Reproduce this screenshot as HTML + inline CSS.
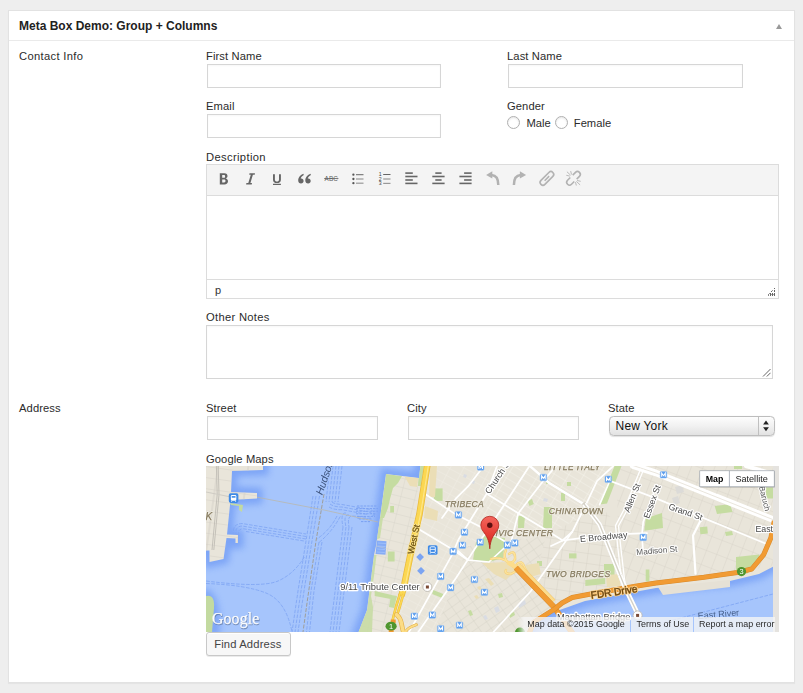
<!DOCTYPE html>
<html>
<head>
<meta charset="utf-8">
<title>Meta Box Demo</title>
<style>
*{box-sizing:border-box;margin:0;padding:0}
html,body{width:803px;height:693px;overflow:hidden}
body{background:#eeeeee;font-family:"Liberation Sans",sans-serif;font-size:11.2px;color:#2e2e2e;position:relative}
.box{position:absolute;left:8px;top:10px;width:787px;height:673px;background:#fff;border:1px solid #e2e2e2;box-shadow:0 1px 1px rgba(0,0,0,.04)}
.hd{position:absolute;left:0;top:0;right:0;height:30px;border-bottom:1px solid #eaeaea}
.title{position:absolute;left:19px;top:19px;font-size:12px;font-weight:bold;color:#222;line-height:14px;white-space:nowrap}
.tri{position:absolute;left:775.6px;top:24px;width:0;height:0;border-left:3.7px solid transparent;border-right:3.7px solid transparent;border-bottom:5.2px solid #999}
.lb{position:absolute;line-height:13px;white-space:nowrap;color:#2b2b2b;letter-spacing:0.1px;margin-left:0}
.in{position:absolute;height:24px;background:#fff;border:1px solid #d6d6d6;box-shadow:inset 0 1px 2px rgba(0,0,0,.035)}
.radio{position:absolute;width:13px;height:13px;border-radius:50%;border:1px solid #b0b0b0;background:#fff;box-shadow:inset 0 1px 2px rgba(0,0,0,.1)}
.ed{position:absolute;left:206px;top:164px;width:573px;height:135px;border:1px solid #dcdcdc;background:#fff}
.tb{position:absolute;left:0;top:0;right:0;height:31px;background:#f4f4f4;border-bottom:1px solid #dcdcdc}
.sb{position:absolute;left:0;right:0;bottom:0;height:19px;border-top:1px solid #dcdcdc;background:#fff}
.ta{position:absolute;left:206px;top:325px;width:567px;height:54px;background:#fff;border:1px solid #d6d6d6;box-shadow:inset 0 1px 2px rgba(0,0,0,.035)}
.sel{position:absolute;left:609px;top:416px;width:166px;height:20px;border:1px solid #bdbdbd;border-radius:4.5px;background:linear-gradient(#fdfdfd,#f1f1f1 50%,#e2e2e2);box-shadow:0 0.5px 1px rgba(0,0,0,.12)}
.sel span{position:absolute;left:5.6px;top:2px;font-size:12px;line-height:14px;color:#111;letter-spacing:0.2px}
.sel i{position:absolute;right:15px;top:0;bottom:0;width:1px;background:#c0c0c0}
.btn{position:absolute;left:206px;top:632px;width:85px;height:24px;background:#f7f7f7;border:1px solid #c8c8c8;border-radius:3px;box-shadow:inset 0 1px 0 #fff,0 1px 0 rgba(0,0,0,.08);text-align:center;line-height:22px;color:#444;font-size:11.2px}
#map{position:absolute;left:206px;top:466px;width:573px;height:166px;background:#e5e3df;overflow:hidden;will-change:transform;opacity:0.999}
</style>
</head>
<body>
<div class="box"></div>
<div class="hd" style="left:9px;top:11px;width:785px"></div>
<div class="title">Meta Box Demo: Group + Columns</div>
<div class="tri"></div>

<div class="lb" style="left:19px;top:50px;letter-spacing:0.33px">Contact Info</div>
<div class="lb" style="left:206px;top:50px">First Name</div>
<div class="in" style="left:207px;top:64px;width:234px"></div>
<div class="lb" style="left:507px;top:50px">Last Name</div>
<div class="in" style="left:508px;top:64px;width:235px"></div>

<div class="lb" style="left:206px;top:100px">Email</div>
<div class="in" style="left:207px;top:114px;width:234px"></div>
<div class="lb" style="left:507px;top:100px">Gender</div>
<div class="radio" style="left:507px;top:116px"></div>
<div class="lb" style="left:526.4px;top:117px;letter-spacing:0">Male</div>
<div class="radio" style="left:555px;top:116px"></div>
<div class="lb" style="left:573.8px;top:117px;letter-spacing:0">Female</div>

<div class="lb" style="left:206px;top:151px;letter-spacing:0.36px">Description</div>
<div class="ed">
  <div class="tb"><svg width="571" height="30" viewBox="0 0 571 30" style="position:absolute;left:0;top:0;font-family:'Liberation Sans',sans-serif">
<g fill="#666666">
<path transform="translate(12.8 8.2)" fill-rule="evenodd" d="M0 0H4.5C6.8 0 7.7 1.2 7.7 2.9C7.7 4.2 7 5 5.9 5.3C7.3 5.6 8.2 6.5 8.2 8C8.2 10 6.8 11.2 4.7 11.2H0ZM2.4 1.9V4.5H4.1C5 4.5 5.3 3.9 5.3 3.2C5.3 2.4 4.9 1.9 4 1.9ZM2.4 6.4V9.3H4.3C5.3 9.3 5.7 8.7 5.7 7.85C5.7 7 5.3 6.4 4.3 6.4Z"/>
<path transform="translate(38.9 8.2)" d="M3.6 0H9.1L8.8 1.5H7L4.5 9.7H6.1L5.8 11.2H0.2L0.5 9.7H2.4L4.9 1.5H3.3Z"/>
<path transform="translate(66 9.2)" d="M0 0H1.9V5.4C1.9 6.9 2.7 7.4 3.95 7.4S6 6.9 6 5.4V0H7.9V5.5C7.9 7.9 6.4 8.9 3.95 8.9S0 7.9 0 5.5ZM0 9.5H7.9V10.7H0Z"/>
<g transform="translate(91.2 8.5)"><path id="qm" d="M5.2 0.3C2.4 1.4 0 3.9 0 6.9C0 8.8 1.2 9.9 2.8 9.9C4.3 9.9 5.4 8.8 5.4 7.4C5.4 6 4.4 5 3.1 5C2.9 5 2.7 5 2.5 5.1C2.8 3.5 4.1 2.2 5.6 1.4Z"/><use href="#qm" x="7.1"/></g>
</g>
<g fill="#5e5e5e"><text x="117.6" y="16.2" font-size="7.1" letter-spacing="0.15" textLength="13.4" lengthAdjust="spacingAndGlyphs">ABC</text><rect x="117.2" y="13.1" width="14.2" height="0.8"/></g>
<!-- UL -->
<g transform="translate(145.2 0)"><circle cx="1.2" cy="9.7" r="1.15" fill="#555"/><circle cx="1.2" cy="14" r="1.15" fill="#555"/><circle cx="1.2" cy="18.2" r="1.15" fill="#555"/><rect x="3.8" y="9.2" width="7.5" height="1" fill="#666"/><rect x="3.8" y="13.4" width="7.5" height="1.2" fill="#999"/><rect x="3.8" y="17.6" width="7.5" height="1.2" fill="#999"/></g>
<!-- OL -->
<g transform="translate(171.8 0)"><g font-size="5.2" fill="#444"><text x="0" y="11.3">1</text><text x="0" y="15.7">2</text><text x="0" y="20.1">3</text></g><rect x="4.4" y="9" width="7.3" height="1" fill="#666"/><rect x="4.4" y="13.4" width="7.3" height="1.2" fill="#999"/><rect x="4.4" y="17.8" width="7.3" height="1.2" fill="#999"/></g>
<!-- align -->
<g fill="#666">
<g transform="translate(198.3 0)"><rect x="0" y="7.3" width="7.5" height="1.6"/><rect x="0" y="10.7" width="12.2" height="1.6"/><rect x="0" y="14.2" width="7.5" height="1.6"/><rect x="0" y="17.6" width="12.2" height="1.6"/></g>
<g transform="translate(225.3 0)"><rect x="3" y="7.3" width="6.3" height="1.6"/><rect x="0" y="10.7" width="12.3" height="1.6"/><rect x="3" y="14.2" width="6.3" height="1.6"/><rect x="0" y="17.6" width="12.3" height="1.6"/></g>
<g transform="translate(252.4 0)"><rect x="4.7" y="7.3" width="7.5" height="1.6"/><rect x="0" y="10.7" width="12.2" height="1.6"/><rect x="4.7" y="14.2" width="7.5" height="1.6"/><rect x="0" y="17.6" width="12.2" height="1.6"/></g>
</g>
<!-- undo / redo -->
<g fill="#b2b2b2" stroke="#b2b2b2">
<g transform="translate(279.1 6.2)"><path d="M0 3.7L6.2 0V7.4Z" stroke="none"/><path d="M5.5 3.7C10.4 4 12.2 8 12.2 13.7" fill="none" stroke-width="2.5"/></g>
<g transform="translate(319.1 6.2) scale(-1 1)"><path d="M0 3.7L6.2 0V7.4Z" stroke="none"/><path d="M5.5 3.7C10.4 4 12.2 8 12.2 13.7" fill="none" stroke-width="2.5"/></g>
</g>
<!-- link / unlink -->
<g fill="none" stroke="#b2b2b2" stroke-width="1.6">
<g transform="translate(339.9 13.4) rotate(-45)"><rect x="-8.4" y="-2.8" width="16.8" height="5.6" rx="2.8"/><path d="M-3.2 0H3.2" stroke-width="1.5"/></g>
<g transform="translate(366.5 13.3) rotate(-45)"><path d="M-1.7 -2.8H-5.6A2.8 2.8 0 0 0 -5.6 2.8H-1.7M1.7 -2.8H5.6A2.8 2.8 0 0 1 5.6 2.8H1.7"/></g>
<g stroke-width="0.9" transform="translate(366.5 13.3)"><path d="M-2.9 -3.1L-6.6 -6.6M-3.6 -2.2L-7.2 -3M-2 -3.8L-2.8 -7.2M2.9 3.1L6.6 6.6M3.6 2.2L7.2 3M2 3.8L2.8 7.2"/></g>
</g>
</svg></div>
  <div class="sb"><svg width="10" height="10" viewBox="0 0 10 10" shape-rendering="crispEdges" style="position:absolute;right:2px;top:7px"><g fill="#666"><rect x="8" y="1" width="1" height="1"/><rect x="6" y="3" width="1" height="1" fill="#999"/><rect x="8" y="3" width="1" height="2"/><rect x="5" y="4" width="1" height="1"/><rect x="2" y="7" width="1" height="2" fill="#888"/><rect x="4" y="6" width="1" height="3"/><rect x="6" y="6" width="1" height="3"/><rect x="8" y="6" width="1" height="3"/><rect x="3" y="6" width="1" height="1" fill="#999"/><rect x="5" y="7" width="1" height="1" fill="#aaa"/><rect x="7" y="7" width="1" height="1" fill="#aaa"/></g></svg><span style="position:absolute;left:8px;top:3.5px;font-size:11px;line-height:13px;color:#333">p</span></div>
</div>

<div class="lb" style="left:206px;top:311px;letter-spacing:0.3px">Other Notes</div>
<div class="ta"><svg width="9" height="9" viewBox="0 0 9 9" style="position:absolute;right:1px;bottom:1px"><path d="M1 8.5L8.5 1M4.8 8.5L8.5 4.8" stroke="#555" stroke-width="0.9" fill="none"/></svg></div>

<div class="lb" style="left:19px;top:402px">Address</div>
<div class="lb" style="left:206px;top:402px">Street</div>
<div class="in" style="left:207px;top:416px;width:171px"></div>
<div class="lb" style="left:407px;top:402px">City</div>
<div class="in" style="left:408px;top:416px;width:171px"></div>
<div class="lb" style="left:608px;top:402px">State</div>
<div class="sel"><span>New York</span><i></i><svg width="8" height="12" viewBox="0 0 8 12" style="position:absolute;right:3.6px;top:3.4px"><path d="M4 0.4L6.9 4.4H1.1ZM4 11.2L6.9 7.2H1.1Z" fill="#222"/></svg></div>

<div class="lb" style="left:206px;top:453px">Google Maps</div>
<div id="map">
<svg width="573" height="166" viewBox="0 0 573 166" style="position:absolute;left:0;top:0;font-family:'Liberation Sans',sans-serif">
<defs>
<clipPath id="tiles"><rect x="0" y="0" width="567" height="166"/></clipPath>
<filter id="bl" x="-10%" y="-10%" width="120%" height="120%"><feGaussianBlur stdDeviation="3.6"/></filter>
<filter id="bl1"><feGaussianBlur stdDeviation="0.5"/></filter>
<g id="m"><rect x="-3.3" y="-3.3" width="6.6" height="6.6" rx="1" fill="#5b9dee" stroke="#8fbcf3" stroke-width="0.5"/><path d="M-1.8 1.9V-1.7L0 0.9 1.8-1.7V1.9" fill="none" stroke="#fff" stroke-width="1.05"/></g>
<path id="nj" d="M-5 -5H57V4L26 5L25 26L51 27V32.5L24.5 34L21 68.5L32 69V77H29.5V72.5L20.5 72L17.5 93L3.5 96V84.5H-5Z"/>
<path id="mh" d="M215 -5L213 12L180 8L174 52L170 80L168 89L161 144L151 170H322L329 156L348 146L379 135L450 122L524 115L553 108L572 98V-5Z"/>
<clipPath id="cmh"><use href="#mh"/></clipPath>
<clipPath id="cnj"><use href="#nj"/></clipPath>
<pattern id="gA" width="12" height="7.5" patternUnits="userSpaceOnUse" patternTransform="rotate(28)"><path d="M0 0H12M0 0V7.5" stroke="#f3f0e8" stroke-width="0.8" fill="none"/></pattern>
<pattern id="gB" width="13" height="7" patternUnits="userSpaceOnUse" patternTransform="rotate(31) translate(3 2)"><path d="M0 0H13M0 0V7" stroke="#f5f3ec" stroke-width="1" fill="none"/></pattern>
<pattern id="gC" width="11" height="15" patternUnits="userSpaceOnUse" patternTransform="rotate(21) translate(2 4)"><path d="M0 0H11M0 0V15" stroke="#d5d1c6" stroke-width="0.8" fill="none"/></pattern>
<pattern id="gD" width="13" height="10" patternUnits="userSpaceOnUse" patternTransform="rotate(8) translate(0 3)"><path d="M0 0H13M0 0V10" stroke="#d3cfc4" stroke-width="0.85" fill="none"/></pattern>
<pattern id="gE" width="10" height="8" patternUnits="userSpaceOnUse" patternTransform="rotate(-35)"><path d="M0 0H10M0 0V8" stroke="#d5d1c6" stroke-width="0.85" fill="none"/></pattern>
<pattern id="gF" width="14" height="9" patternUnits="userSpaceOnUse" patternTransform="rotate(14)"><path d="M0 0H14M0 0V9" stroke="#d6d2c8" stroke-width="0.8" fill="none"/></pattern>
<pattern id="gJ" width="30" height="11" patternUnits="userSpaceOnUse" patternTransform="rotate(8)"><path d="M0 0H30M12 0V11" stroke="#d2cec6" stroke-width="0.9" fill="none"/></pattern>
<linearGradient id="pin" x1="0" y1="0" x2="0" y2="1"><stop offset="0" stop-color="#f4675e"/><stop offset="0.55" stop-color="#e53d35"/><stop offset="1" stop-color="#c9271f"/></linearGradient>
</defs>
<g clip-path="url(#tiles)">
<!-- water -->
<rect x="0" y="0" width="567" height="166" fill="#a6c5fc"/>
<g filter="url(#bl)" fill="none" stroke="#7aa3f6" stroke-width="11" opacity="0.95">
<use href="#nj"/><use href="#mh"/><path d="M-4 128Q10 128 8 170"/>
</g>
<g fill="none" stroke="#7fa5f3" stroke-width="0.85" stroke-dasharray="3.6 1.4">
<!-- H2 left group -->
<path d="M28 70Q25 58 36 57.5L100 68"/>
<path d="M30.5 70Q28 60.5 36 60L100 70.5"/>
<path d="M33 70Q31 63 37 62.7L100 73"/>
<path d="M40 65.5L98 75"/>
<!-- V1 top group -->
<path d="M124 0L120 36"/><path d="M127 0L123 36"/><path d="M130 0L126 36"/><path d="M133 0L129 36"/><path d="M136 0L132 36"/>
<!-- H1 fan to shore -->
<path d="M126 36Q128 38 136 38.5L164 43.5Q169 45 168 50"/>
<path d="M124 38Q128 41 136 41L163 46Q167 47 167 50"/>
<path d="M123 41Q128 44 136 43.7L162 48.5"/>
<path d="M140 47Q134 46 137 61"/><path d="M143 49Q137 48 140 61"/><path d="M160 51L146 50Q141 50 143 61"/>
<path d="M165 52L150 52.5"/>
<!-- V2 beside boundary -->
<path d="M107 30L100 75L92 125L86 166"/>
<path d="M110 30L103 75L95 125L89 166"/>
<path d="M113.5 30L106 75L98 125L92 166"/>
<path d="M113 76L105 125L100.5 166"/>
<path d="M116 76L108 125L103.5 166"/>
<!-- V3 -->
<path d="M137 61L131 110L124 166"/><path d="M140 61L134 110L127 166"/><path d="M143 61L137 110L130 166"/><path d="M146 61L140 110L133 166"/>
<!-- curves -->
<path d="M134.3 50.4Q126 66 112.7 76.7"/><path d="M131 50Q124 64 111 73"/>
<path d="M98.3 91Q88 108 72 115T0 115"/>
<path d="M0 117.5Q40 119 60 127T86 166"/>
<path d="M452 158L567 128"/>
</g>
<g fill="none" stroke="#7aa1f2" stroke-width="1" stroke-dasharray="2.4 1"><path d="M151 40h20M150 42.6h22M150 45.2h22M150 47.8h20M151 50.4h18M153 53h13M155 55.6h9"/></g>
<path d="M50 31L118 44L172 56" stroke="#b9b7ae" stroke-width="0.8" fill="none"/>
<path d="M118 28L110 75L102 130L97 166" stroke="#9d9a90" stroke-width="0.9" stroke-dasharray="4 1.5" fill="none"/>
<!-- land -->
<use href="#nj" fill="#e9e5da"/>
<use href="#mh" fill="#e9e5da"/>
<path d="M0 130Q9 128 8 142L6 166H0Z" fill="#c3daa0"/>
<path d="M24 37L37 39L36 46L33 44V40L25 39Z" fill="#c3daa0"/>
<path d="M452 121L524 114V121L457 129Z" fill="#e6e1d5"/>
<path d="M171 74.5l9.5 0.8-1 13.5-10-0.8z" fill="#86acf6"/><path d="M172 77l8 .6M171.6 80l8 .6M171.2 83l8 .6M170.8 86l8 .6" stroke="#a6c5fc" stroke-width="0.7"/>
<g clip-path="url(#cnj)"><rect x="0" y="0" width="60" height="100" fill="url(#gJ)"/><path d="M10.4 0L11.2 28.5L6 84M12.2 0L13 28.5L7.8 84" stroke="#bfbcb4" stroke-width="0.9" fill="none"/><path d="M0 26L25 31" stroke="#cfccc4" stroke-width="1.2" fill="none"/></g>
<g clip-path="url(#cmh)">
<!-- minor road grids -->
<path d="M224 0H300L262 80L229 166H186L205 86Z" fill="url(#gA)" opacity="0.85"/>
<path d="M300 0H410L395 40L340 70L262 80Z" fill="url(#gB)" opacity="0.95"/>
<path d="M410 0H567V100L450 120L418 118L412 60Z" fill="url(#gC)" opacity="0.95"/>
<path d="M340 70L395 40L412 60L418 118L350 140L330 110Z" fill="url(#gD)"/>
<path d="M229 166L262 80L340 70L330 110L350 140L322 166Z" fill="url(#gE)"/>
<path d="M180 8L213 12L205 86L186 166H151L168 89Z" fill="url(#gF)"/>
<!-- parks -->
<g fill="#c5dca1">
<path d="M180 8L196 10L192 17L187 22L184 33L182 42L178 52L174 52Z"/>
<path d="M174 52L177 52L174 72L170 74L168 89L170.5 89L168 110L165 130L167 141L166 166H152L161 144L168 89Z" opacity="0.85"/>
<rect x="184.2" y="40" width="3.8" height="6.5"/>
<path d="M213.5 0h4.4l-3 20h-3z"/>
<rect x="227.8" y="22.4" width="8.8" height="12.5"/>
<path d="M312.3 50L319 50L318 62L312 62Z"/>
<path d="M338 41L346 41L346 62L337 62Z"/>
<path d="M321.6 35L326 33L327.8 38L323.5 40Z"/>
<path d="M270 76L279 70L299 72L297 92L283 96L267 94Z"/>
<path d="M408.5 0H415.4L401 37.4L393.6 38.6Z"/>
<path d="M439.7 52.3L456 47L457 62L438.4 64.8Z"/>
<rect x="363" y="87.4" width="7.5" height="5"/>
<rect x="398" y="98" width="10.5" height="11"/>
<path d="M379.3 114L399.2 112V118L379.3 120Z"/>
<rect x="439.7" y="103.5" width="3.7" height="12"/>
<path d="M530 91L553 88.6L555 95.8L541 107.7L530 105Z"/>
<path d="M508.7 40L524 38.3L526.6 46L511 48Z"/>
<rect x="494" y="61" width="7.5" height="7" transform="rotate(-5 497 64)"/>
<path d="M519 66l7-1 1 4-7 1z"/>
<path d="M560 21.5h8v11h-8z"/>
<path d="M227.2 124l10 4-1 4-10-4z"/>
<path d="M168.7 125l17 4-1 4-16-3z"/>
<path d="M185 129l6 1-3 12-5-1z"/>
<rect x="181.8" y="85.5" width="6.8" height="10"/>
<rect x="331" y="95" width="5" height="5"/><rect x="340" y="14" width="3" height="4"/>
<rect x="361" y="16" width="4" height="4"/><rect x="355" y="27" width="4" height="8"/>
<path d="M292 128l4-1 1 4-4 1z"/><path d="M262 145l3-1 2 5-3 1z"/><path d="M303 148l5-2 1 3-5 3z"/><path d="M281 101l6-4 1 2-6 4z"/>
<rect x="528" y="0" width="8" height="3"/>
</g>
<!-- tan -->
<g fill="#ebdeb6">
<path d="M198.6 10.6L212.3 12L211 21L204 20Z"/>
<path d="M224 0h7l-2 31h-6z"/>
<path d="M219 40L232 45L231 55L218 52Z"/>
<path d="M276 97L305 96L309 104L300 114L288 108Z"/>
<path d="M319.7 99L333 97L334.7 108L323 111.6Z"/>
<path d="M399.8 109L414.8 108L414 120L401 121Z"/>
<path d="M279 113l4-1 5 6-3 2zM271 121l3-1 2 3-3 1zM268 130l3-1 2 3-3 1z"/>
</g>
<g fill="#dcdbd8"><path d="M469 21l7-2 2 7-7 2zM466 32l6-2 2 7-6 2z"/></g>
<g fill="#d9dce3"><path d="M288 142l4-2 2 5-4 2zM277 150l3-1 2 4-3 1zM312 138l7-4 1 4-7 4zM338 32l4 1-1 3-4-1zM258 8l3 1-1 3-3-1zM266 14l3 1-1 3-3-1z"/></g>
</g>
<g clip-path="url(#cmh)" fill="none" stroke-linecap="round" stroke-linejoin="round">
<!-- white major roads: casing then fill -->
<g stroke="#d8d4c9" stroke-width="2.8">
<path d="M324 0L343 16.8L378.6 38.6"/>
<path d="M427 0L450 7.5L568 55"/>
</g>
<g stroke="#ffffff" stroke-width="1.7">
<path d="M219.1 28L250 48.6L274.9 61L299.8 76"/>
<path d="M214.1 64.1L244.6 82.2L262 94"/>
<path d="M291 0L280.5 28L252.5 73.5L245.9 89.2L208.5 156.5L203 166"/>
<path d="M323.5 0L291 49.8L268.7 83L250 112L219.7 155.2L212.3 166"/>
<path d="M276.8 0L274.9 3.7L262.5 19.9L250 32.4L236 52"/>
<path d="M350 0L337.2 14.9L312.3 47.3L305.4 74.7L300 83"/>
<path d="M281.1 28L312.3 47.3L337.2 62.3L356 74"/>
<path d="M366 66L350 89.2L324.7 125.3L287.4 166"/>
<path d="M252 85L262 94L283 96L296 84L305 76"/>
<path d="M407.3 0L391.1 14.9L379.9 38.6L366.2 66L356.2 74.7L345 80"/>
<path d="M356.2 74.7L374.9 72.2L422.2 67.9L441 67.2"/>
<path d="M404.8 12.5L393.6 38.6"/>
<path d="M406 15.6L450 32.4L560 77.8"/>
<path d="M450 21.2L437.2 56L435.9 69.7L437 84"/>
<path d="M494.3 55L487 69.4L489.5 107.7" stroke-width="2.2"/>
</g>
<g stroke="#ffffff" stroke-width="2.6">
<path d="M324 0L343 16.8L378.6 38.6"/>
</g>
<!-- Delancey / Williamsburg br -->
<path d="M427 -0.5L450 7L568 54" stroke="#ffffff" stroke-width="6.6"/>
<path d="M427 -0.5L450 7L568 54" stroke="#e6e2d8" stroke-width="0.9"/>
<path d="M540 0L568 8" stroke="#ffffff" stroke-width="4"/>
<!-- Manhattan bridge approach (double) -->
<path d="M378.6 38.6L393.6 58.5L403.5 83L419.7 122.9L432.2 149L440 166" stroke="#d5d1c6" stroke-width="4.6"/>
<path d="M377.4 39.4L392.3 59.2L402.1 83.6L418.3 123.5L430.8 149.6L438.6 166.6M379.8 37.8L394.9 57.8L404.9 82.4L421.1 122.3L433.6 148.4L441.4 165.4" stroke="#ffffff" stroke-width="1.7"/>
<!-- Allen St double -->
<path d="M434.5 3.2L418.3 43L409.5 59.6L412 83L416 118M437.3 4.2L421.1 44.2L412.5 60L415 83L419 118" stroke="#ffffff" stroke-width="1.3"/>
<!-- yellow West St -->
<path d="M221.5 -2L213.5 48L205 86L198 120.4L195.4 130" stroke="#e9b93a" stroke-width="6.6" stroke-linecap="butt"/>
<path d="M221.5 -2L213.5 48L205 86L198 120.4L195.4 130" stroke="#fbd752" stroke-width="5.2" stroke-linecap="butt"/>
<path d="M222.6 -2L214.6 48L206.1 86L199.1 120.4" stroke="#fde68c" stroke-width="1.1" stroke-linecap="butt"/>
<g stroke-linecap="butt"><path d="M194 128L190.2 140L186.6 154M197.4 128L194 140L191 149.4" stroke="#e9b93a" stroke-width="2.6"/><path d="M194 128L190.2 140L186.6 154M197.4 128L194 140L191 149.4" stroke="#fbd752" stroke-width="1.7"/></g>
<!-- interchange bottom -->
<g stroke="#e2ae45" stroke-width="4.6"><path d="M190.6 148.6Q194.6 152 195.6 158T198 168"/></g>
<g stroke="#e2ae45" stroke-width="3"><path d="M199.6 166Q200.4 162.4 210.4 158.7"/></g>
<g stroke="#fcdc84" stroke-width="3.4"><path d="M190.6 148.6Q194.6 152 195.6 158T198 168"/></g>
<g stroke="#fcdc84" stroke-width="1.9"><path d="M199.6 166Q200.4 162.4 210.4 158.7"/></g>
<path d="M187.2 153.6V157M185.2 163V168" stroke="#ef9a32" stroke-width="5" stroke-linecap="butt"/>
<!-- Brooklyn bridge interchange swirls -->
<g stroke="#f3cf7a" stroke-width="2.4"><path d="M285 93Q295 90 303 97T310 102M300 84Q296 92 303 97M303 88Q308 84 309 90T304 97M311 98Q316 94 318 100L322 108M300 104Q298 108 305 108L312 104"/></g>
<g stroke="#fde39a" stroke-width="1.4"><path d="M285 93Q295 90 303 97T310 102M300 84Q296 92 303 97M303 88Q308 84 309 90T304 97M311 98Q316 94 318 100L322 108M300 104Q298 108 305 108L312 104"/></g>
<path d="M311.6 100.6L346.4 136.4" stroke="#f0c878" stroke-width="8.2" stroke-linecap="butt"/><path d="M311.6 100.6L346.4 136.4" stroke="#fcdc8c" stroke-width="7.2" stroke-linecap="butt"/><path d="M303 97L312 102" stroke="#fcdc8c" stroke-width="4.5" stroke-linecap="round"/>
</g>
<g fill="none" stroke-linejoin="round">
<!-- orange: Brooklyn bridge + FDR -->
<path d="M309.8 101.7L348 141L367 168" stroke="#d98a2b" stroke-width="5.6"/>
<path d="M309.8 101.7L348 141L367 168" stroke="#f19b33" stroke-width="4.7"/>
<path d="M322 170L328 156L348 143.5L356 137L366.2 131.5L387.4 127.5L431 120L450 117L497.9 111.3L531.4 106.5L545.8 103L557.7 88.6L564.9 71.8L568.3 55" stroke="#d98a2b" stroke-width="5"/>
<path d="M322 170L328 156L348 143.5L356 137L366.2 131.5L387.4 127.5L431 120L450 117L497.9 111.3L531.4 106.5L545.8 103L557.7 88.6L564.9 71.8L568.3 55" stroke="#f19b33" stroke-width="4"/>
</g>

<g fill="none"><path d="M414 109L419.7 122.9L431 146.5" stroke="#d5d1c6" stroke-width="4.2"/><path d="M412.7 109.5L418.3 123.5L429.6 147M415.4 108.5L421.1 122.3L432.4 145.8" stroke="#ffffff" stroke-width="1.7"/></g>
<defs>
<g id="Lroad" font-size="8.8">
<text x="134.2" y="124.3" font-size="9.4">9/11 Tribute Center</text>
<text transform="translate(374.3 76) rotate(-5.3)">E Broadway</text>
<text transform="translate(283.6 28.4) rotate(-56)">Church St</text>
<text transform="translate(423.2 47) rotate(-68)">Allen St</text>
<text transform="translate(443 53) rotate(-70)">Essex St</text>
<text transform="translate(462 43) rotate(19)">Grand St</text>
<text x="351" y="153.6" font-size="9.3">Manhattan Bridge</text>
<text x="549.4" y="66">East</text>
</g>
<g id="Lroad2">
<text transform="translate(430.6 89) rotate(-5)" font-size="8.2">Madison St</text>
<text transform="translate(553 21) rotate(76)" font-size="8">Baruch</text>
</g>
<g id="Lhood" font-size="8.6" font-style="italic" letter-spacing="0.3">
<text x="238.7" y="41">TRIBECA</text>
<text x="342.7" y="47.8">CHINATOWN</text>
<text x="283" y="70.2">CIVIC CENTER</text>
<text x="340" y="111.4">TWO BRIDGES</text>
<text x="338" y="4.4">LITTLE ITALY</text>
<text x="-0.5" y="53.6" font-size="10">K</text>
</g>
<g id="Lhwy">
<text transform="translate(385.3 132.8) rotate(-8.3)" font-size="10.1">FDR Drive</text>
</g>
<text id="Lwest" transform="translate(207.5 88.6) rotate(-78)" font-size="8.6">West St</text>
</defs>
<use href="#Lroad" fill="none" stroke="#ffffff" stroke-width="2.4" stroke-linejoin="round"/>
<use href="#Lroad" fill="#484848"/>
<use href="#Lroad2" fill="none" stroke="#ffffff" stroke-width="2.2" stroke-linejoin="round" opacity="0.9"/>
<use href="#Lroad2" fill="#5a5a5a"/>
<use href="#Lhood" fill="none" stroke="#f1eee5" stroke-width="1.6" stroke-linejoin="round"/>
<use href="#Lhood" fill="#857a5e" stroke="#857a5e" stroke-width="0.25"/>
<use href="#Lhwy" fill="none" stroke="#fbd08a" stroke-width="2.2" stroke-linejoin="round"/>
<use href="#Lhwy" fill="#6a430c" stroke="#6a430c" stroke-width="0.35"/>
<use href="#Lwest" fill="none" stroke="#fde590" stroke-width="2" stroke-linejoin="round"/>
<use href="#Lwest" fill="#6d5210" stroke="#6d5210" stroke-width="0.25"/>
<text transform="translate(492 153) rotate(-5)" font-size="9" fill="#46608c" stroke="#a6c5fc" stroke-width="1.5" style="paint-order:stroke">East River</text>
<text transform="translate(116.2 29.6) rotate(-71)" font-size="10.4" font-style="italic" fill="#3a5078" stroke="#a6c5fc" stroke-width="1.2" style="paint-order:stroke">Hudson</text>
<g>
<use href="#m" x="252.4" y="48.9"/><use href="#m" x="258.4" y="66.2"/><use href="#m" x="256.4" y="79.2"/><use href="#m" x="274.2" y="76.2"/><use href="#m" x="247.1" y="85.4"/>
<use href="#m" x="234.7" y="110.4"/><use href="#m" x="244.6" y="121.6"/><use href="#m" x="268.4" y="113.5"/><use href="#m" x="278.4" y="126.3"/><use href="#m" x="208.3" y="150.2"/>
<use href="#m" x="226.3" y="149"/><use href="#m" x="253.5" y="159.2"/><use href="#m" x="234.7" y="162.7"/><use href="#m" x="274.7" y="1"/><use href="#m" x="301.4" y="79.1"/><use href="#m" x="308.8" y="77"/>
<use href="#m" x="337.4" y="11.5"/><use href="#m" x="402.3" y="13.3"/><use href="#m" x="437.2" y="71.4"/><use href="#m" x="457.5" y="8.8"/>
<!-- rail icon -->
<g transform="translate(226.7 84)"><rect x="-4.8" y="-4.8" width="9.6" height="9.6" rx="1.6" fill="#3f8ae6"/><rect x="-2.6" y="-3.2" width="5.2" height="5.6" rx="1" fill="none" stroke="#fff" stroke-width="0.9"/><path d="M-2.4 -0.6h4.8M-2.6 3.6l.8-1.2M2.6 3.6l-.8-1.2" stroke="#fff" stroke-width="0.8" fill="none"/></g>
<g transform="translate(27.6 32.1)"><rect x="-4.8" y="-4.8" width="9.6" height="9.6" rx="1.8" fill="#3f8ae6"/><rect x="-2.7" y="-3" width="5.4" height="5.6" rx="1.1" fill="#fff"/><rect x="-1.9" y="-2" width="3.8" height="1.6" fill="#3f8ae6"/><path d="M-2 3.6v-1M2 3.6v-1" stroke="#fff" stroke-width="0.9"/></g>
<!-- 9/11 pools -->
<path d="M214.1 87.2l3.9 3.9-3.9 3.9-3.9-3.9z" fill="#7ba4f2"/><path d="M215 100.9l3.9 3.9-3.9 3.9-3.9-3.9z" fill="#7ba4f2"/>
<!-- poi markers -->
<g><circle cx="221.4" cy="121" r="4.5" fill="#fff" stroke="#b7b3aa" stroke-width="0.8"/><rect x="219.9" y="119.5" width="3" height="3" fill="#7a4a35"/></g>
<g><circle cx="431.6" cy="149.4" r="4.5" fill="#fff" stroke="#b7b3aa" stroke-width="0.8"/><rect x="430.1" y="147.9" width="3" height="3" fill="#7a4a35"/></g>
<!-- shields -->
<g><ellipse cx="185.1" cy="160.2" rx="5.6" ry="4.4" fill="#4f962f"/><text x="185.1" y="163" font-size="7.4" fill="#fff" text-anchor="middle">1</text></g>
<g><circle cx="535.5" cy="105.6" r="4.6" fill="#4f962f"/><text x="535.5" y="108.3" font-size="7.4" fill="#fff" text-anchor="middle">3</text></g>
<ellipse cx="314" cy="166" rx="5" ry="4.4" fill="#4f962f"/>
<!-- pin -->
<g transform="translate(283.8 82.8)">
<path d="M0 0C-0.6 -9 -3.4 -13 -6.6 -17.4A9 9 0 1 1 6.6 -17.4C3.4 -13 0.6 -9 0 0Z" fill="url(#pin)" stroke="#b0261e" stroke-width="0.8"/>
<circle cx="0" cy="-23.6" r="2.7" fill="#5c1010"/>
</g>
</g>
</g>
<!-- copyright bar -->
<defs><linearGradient id="cg" x1="0" x2="1"><stop offset="0" stop-color="#f5f5f5" stop-opacity="0"/><stop offset="1" stop-color="#f5f5f5" stop-opacity="0.8"/></linearGradient></defs>
<rect x="311" y="151" width="7" height="15" fill="url(#cg)"/>
<rect x="318" y="151" width="106" height="15" fill="#f5f5f5" opacity="0.8"/>
<rect x="425" y="151" width="62" height="15" fill="#f5f5f5" opacity="0.8"/>
<rect x="488" y="151" width="81" height="15" fill="#f5f5f5" opacity="0.8"/>
<g font-size="8.95" fill="#2a2a2a">
<text x="321.3" y="161">Map data ©2015 Google</text>
<text x="430.6" y="161">Terms of Use</text>
<text x="493" y="161">Report a map error</text>
</g>
<!-- Map / Satellite -->
<g>
<rect x="494.2" y="5.2" width="74.6" height="16.4" fill="#000" opacity="0.18" filter="url(#bl1)"/>
<rect x="493.8" y="4.8" width="74.4" height="16" fill="#fff" stroke="#8e96a1" stroke-width="0.6"/>
<path d="M523.4 4.8V20.8" stroke="#9aa2ad" stroke-width="0.8"/>
<text x="508.6" y="16.2" font-size="8.8" font-weight="bold" fill="#000" text-anchor="middle">Map</text>
<text x="545.6" y="16.2" font-size="9.1" fill="#222" text-anchor="middle">Satellite</text>
</g>
<!-- Google logo -->
<text x="6" y="158.3" font-family="'Liberation Serif',serif" font-size="15.8" fill="#4f6488" opacity="0.55" letter-spacing="0.15" filter="url(#bl1)" transform="translate(0.5 0.8)" stroke="#4f6488" stroke-width="0.6">Google</text>
<text x="6" y="158.3" font-family="'Liberation Serif',serif" font-size="15.8" fill="#fbfcfe" stroke="#fbfcfe" stroke-width="0.25" letter-spacing="0.15">Google</text>
</svg>

</div>
<div class="btn"><span style="letter-spacing:0.17px;margin-left:-1.4px">Find Address</span></div>
</body>
</html>
